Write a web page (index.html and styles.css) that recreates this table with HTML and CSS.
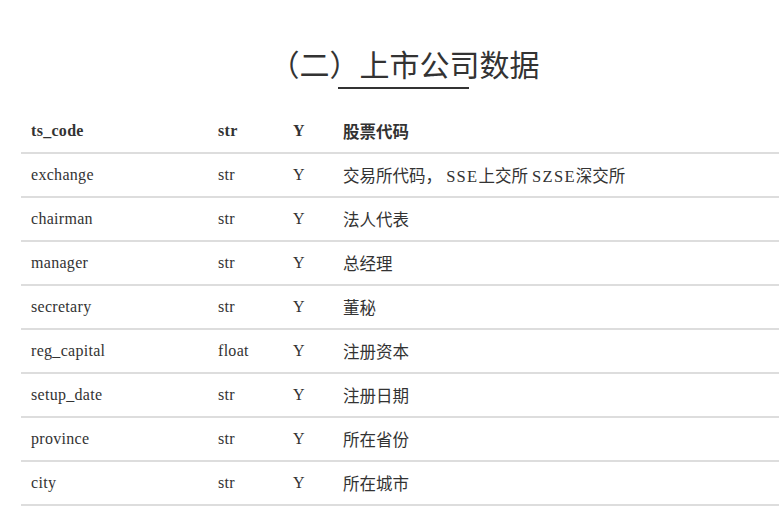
FILE: index.html
```html
<!DOCTYPE html>
<html lang="zh-CN">
<head>
<meta charset="utf-8">
<title>上市公司数据</title>
<link rel="stylesheet" href="styles.css">
</head>
<body>
<div class="page">
  <h2 class="title">（二）上市公司数据</h2>
  <div class="title-bar"></div>
  <div class="table">
    <div class="row head"><div>ts_code</div><div>str</div><div>Y</div><div class="desc">股票代码</div></div>
    <div class="row"><div>exchange</div><div>str</div><div>Y</div><div class="desc">交易所代码， <span class="lat">SSE</span>上交所 <span class="lat">SZSE</span>深交所</div></div>
    <div class="row"><div>chairman</div><div>str</div><div>Y</div><div class="desc">法人代表</div></div>
    <div class="row"><div>manager</div><div>str</div><div>Y</div><div class="desc">总经理</div></div>
    <div class="row"><div>secretary</div><div>str</div><div>Y</div><div class="desc">董秘</div></div>
    <div class="row"><div>reg_capital</div><div>float</div><div>Y</div><div class="desc">注册资本</div></div>
    <div class="row"><div>setup_date</div><div>str</div><div>Y</div><div class="desc">注册日期</div></div>
    <div class="row"><div>province</div><div>str</div><div>Y</div><div class="desc">所在省份</div></div>
    <div class="row"><div>city</div><div>str</div><div>Y</div><div class="desc">所在城市</div></div>
  </div>
</div>
</body>
</html>
```

FILE: styles.css
```css
html, body {
  margin: 0;
  padding: 0;
  background: #fff;
  overflow: hidden;
}
.page {
  margin-left: 21px;
  width: 781px;
  color: #333;
  font-family: "Liberation Serif", "Noto Sans CJK SC", serif;
  font-size: 16px;
}
.title {
  margin: 0;
  padding-top: 43px;
  padding-right: 14px;
  height: 40px;
  line-height: 40px;
  text-align: center;
  font-family: "Noto Sans CJK SC", "Noto Sans", sans-serif;
  font-weight: normal;
  font-size: 30px;
  color: #333;
}
.title-bar {
  margin-left: 317px;
  margin-top: 4px;
  width: 131px;
  height: 2px;
  background: #333;
}
.table {
  margin-top: 21px;
}
.row {
  display: grid;
  grid-template-columns: 187px 75px 50px 1fr;
  align-items: center;
  height: 44px;
  box-sizing: border-box;
  border-bottom: 2px solid #ddd;
  letter-spacing: 0.3px;
}
.row > div {
  padding-left: 10px;
  white-space: nowrap;
}
.row > .desc {
  font-size: 16.5px;
  letter-spacing: 0;
}
.lat {
  letter-spacing: 1.3px;
}
.row.head {
  font-weight: bold;
}
```
